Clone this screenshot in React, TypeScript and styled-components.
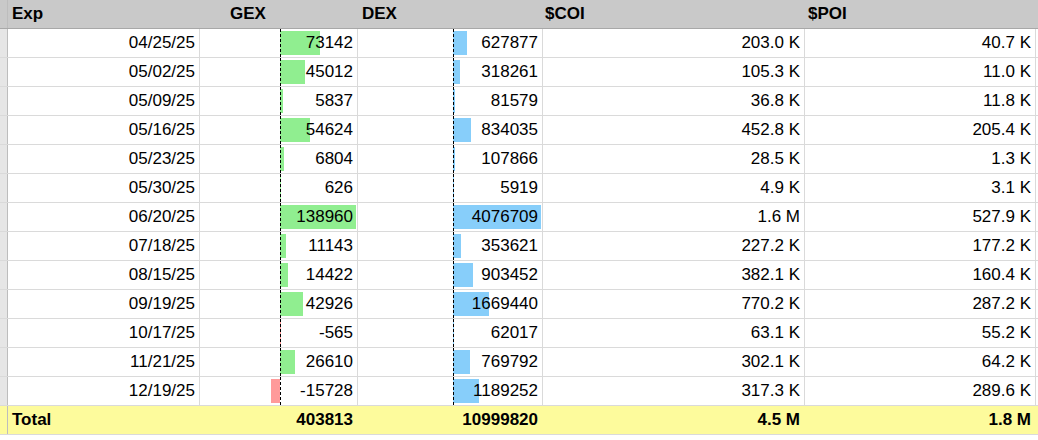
import React from "react";
import styled, { createGlobalStyle } from "styled-components";

const G = createGlobalStyle`body{margin:0;background:#fff;font-family:"Liberation Sans",Arial,sans-serif;}`;

const data: [string, number, number, string, string][] = [
  ["04/25/25", 73142, 627877, "203.0 K", "40.7 K"],
  ["05/02/25", 45012, 318261, "105.3 K", "11.0 K"],
  ["05/09/25", 5837, 81579, "36.8 K", "11.8 K"],
  ["05/16/25", 54624, 834035, "452.8 K", "205.4 K"],
  ["05/23/25", 6804, 107866, "28.5 K", "1.3 K"],
  ["05/30/25", 626, 5919, "4.9 K", "3.1 K"],
  ["06/20/25", 138960, 4076709, "1.6 M", "527.9 K"],
  ["07/18/25", 11143, 353621, "227.2 K", "177.2 K"],
  ["08/15/25", 14422, 903452, "382.1 K", "160.4 K"],
  ["09/19/25", 42926, 1669440, "770.2 K", "287.2 K"],
  ["10/17/25", -565, 62017, "63.1 K", "55.2 K"],
  ["11/21/25", 26610, 769792, "302.1 K", "64.2 K"],
  ["12/19/25", -15728, 1189252, "317.3 K", "289.6 K"],
];

const COLS = "8px 192px 158px 185px 262px 231px";

const Row = styled.div<{ $kind?: "head" | "total" }>`
  display: grid;
  grid-template-columns: ${COLS};
  height: 29px;
  font-size: 17px;
  color: #000;
  background: ${(p) => (p.$kind === "head" ? "#c9c9c9" : p.$kind === "total" ? "#fdfb9c" : "#fff")};
  font-weight: ${(p) => (p.$kind ? "bold" : "normal")};
  border-bottom: 1px solid ${(p) => (p.$kind === "head" ? "#a8a8a8" : "#dadada")};
  box-sizing: border-box;
`;

const Gutter = styled.div<{ $kind?: string }>`
  background: ${(p) => (p.$kind === "head" ? "#c9c9c9" : p.$kind === "total" ? "#fdfb9c" : "#e6e6e6")};
  border-right: 1px solid #bdbdbd;
`;

const Cell = styled.div<{ $align?: "left" | "right"; $pl?: number; $kind?: string }>`
  position: relative;
  display: flex;
  align-items: center;
  justify-content: ${(p) => (p.$align === "left" ? "flex-start" : "flex-end")};
  padding: 0 4px 0 ${(p) => p.$pl ?? 4}px;
  border-right: 1px solid ${(p) => (p.$kind ? "transparent" : "#dadada")};
  overflow: hidden;
`;

const Text = styled.span`
  position: relative;
  z-index: 1;
`;

const Axis = styled.div<{ $x: number }>`
  position: absolute;
  left: ${(p) => p.$x}px;
  top: 0;
  bottom: 0;
  border-left: 1px dashed #000;
`;

const Bar = styled.div<{ $c: string }>`
  position: absolute;
  top: 2px;
  bottom: 2px;
  background: ${(p) => p.$c};
`;

function BarCell({ v, axis, scale, pos, neg }: { v: number; axis: number; scale: number; pos: string; neg: string }) {
  const w = Math.abs(v) * scale;
  return (
    <Cell>
      <Bar $c={v >= 0 ? pos : neg} style={v >= 0 ? { left: axis, width: w } : { left: axis - w, width: w }} />
      <Axis $x={axis} />
      <Text>{v}</Text>
    </Cell>
  );
}

export default function App() {
  return (
    <>
      <G />
      <Row $kind="head">
        <Gutter $kind="head" />
        <Cell $align="left" $kind="head">Exp</Cell>
        <Cell $align="left" $pl={30} $kind="head">GEX</Cell>
        <Cell $align="left" $kind="head">DEX</Cell>
        <Cell $align="left" $pl={2} $kind="head">$COI</Cell>
        <Cell $align="left" $pl={3} $kind="head">$POI</Cell>
      </Row>
      {data.map((r) => (
        <Row key={r[0]}>
          <Gutter />
          <Cell>{r[0]}</Cell>
          <BarCell v={r[1]} axis={80} scale={76 / 138960} pos="#90ee90" neg="#ff9a9a" />
          <BarCell v={r[2]} axis={95} scale={88 / 4076709} pos="#87cefa" neg="#ff9a9a" />
          <Cell>{r[3]}</Cell>
          <Cell>{r[4]}</Cell>
        </Row>
      ))}
      <Row $kind="total">
        <Gutter $kind="total" />
        <Cell $align="left" $kind="total">Total</Cell>
        <Cell $kind="total">403813</Cell>
        <Cell $kind="total">10999820</Cell>
        <Cell $kind="total">4.5 M</Cell>
        <Cell $kind="total">1.8 M</Cell>
      </Row>
    </>
  );
}
